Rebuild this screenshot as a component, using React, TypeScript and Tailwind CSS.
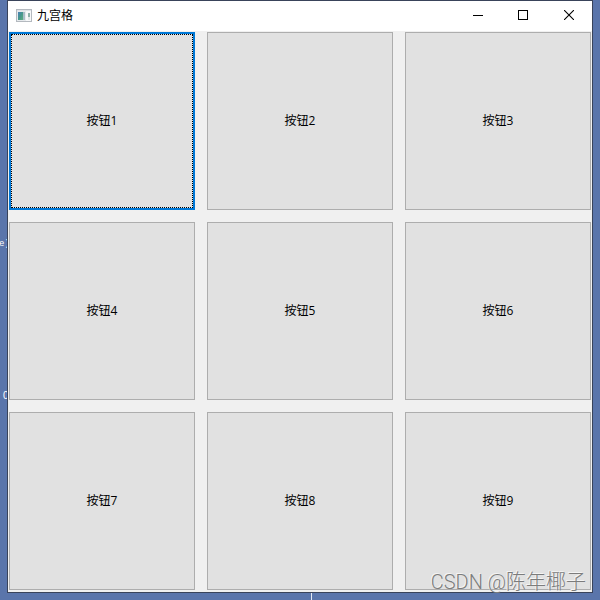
import React, { useState } from "react";

const labels = ["按钮1", "按钮2", "按钮3", "按钮4", "按钮5", "按钮6", "按钮7", "按钮8", "按钮9"];

function AppIcon() {
  return (
    <svg width="16" height="14" viewBox="0 0 16 14" shapeRendering="crispEdges" aria-hidden="true">
      <defs>
        <linearGradient id="pane" x1="0" y1="0" x2="1" y2="1">
          <stop offset="0" stopColor="#4a7fb8" />
          <stop offset="0.5" stopColor="#45968c" />
          <stop offset="1" stopColor="#5fae7d" />
        </linearGradient>
      </defs>
      <rect x="0" y="0" width="16" height="13" fill="#b4b9bf" />
      <rect x="1" y="1" width="14" height="11" fill="#dfe2e6" />
      <rect x="1" y="2" width="9" height="10" fill="#e6eaed" />
      <rect x="2" y="3" width="5" height="8" fill="url(#pane)" />
      <rect x="7" y="3" width="2" height="8" fill="#a9bdc6" />
      <rect x="10" y="2" width="5" height="10" fill="#f7f8f9" />
      <rect x="12" y="4" width="2" height="4" fill="#8cb0a8" />
      <rect x="12" y="8" width="2" height="3" fill="#e2e6e8" />
    </svg>
  );
}

function TitleBar() {
  const control = "flex h-[28px] items-center justify-center text-black hover:bg-[#e5e5e5]";
  return (
    <header className="flex h-[30px] shrink-0 items-start bg-white pl-2">
      <div className="flex h-[30px] flex-1 items-center gap-[5px]">
        <AppIcon />
        <h1 className="text-xs text-black">九宫格</h1>
      </div>
      <button aria-label="最小化" className={`${control} w-[44px]`}>
        <svg width="10" height="10" shapeRendering="crispEdges">
          <path d="M0 5.500H10" stroke="currentColor" />
        </svg>
      </button>
      <button aria-label="最大化" className={`${control} w-[46px]`}>
        <svg width="10" height="10" shapeRendering="crispEdges">
          <rect x="0.500" y="0.500" width="9" height="9" fill="none" stroke="currentColor" />
        </svg>
      </button>
      <button aria-label="关闭" className={`${control} w-[46px]`}>
        <svg width="10" height="10">
          <path d="M0 0L10 10M10 0L0 10" stroke="currentColor" strokeWidth="1.100" />
        </svg>
      </button>
    </header>
  );
}

export default function App() {
  const [active, setActive] = useState(0);
  return (
    <div
      className="relative flex h-screen flex-col overflow-hidden bg-[#5a75ab] px-[7px] pb-[7px]"
      style={{ fontFamily: '"Open Sans", "Noto Sans CJK SC", sans-serif' }}
    >
      <span className="absolute top-[238px] left-[-1px] font-['Liberation_Mono',monospace] text-[9px] leading-3 text-white">
        e)
      </span>
      <span className="absolute top-[390px] left-[3px] font-['Liberation_Sans',sans-serif] text-[10px] leading-3 text-white">
        0
      </span>
      <span className="absolute bottom-0 left-[311px] h-[7px] w-px bg-[#e3e8f2]" />

      <main className="relative flex flex-1 flex-col border border-[#39435a] bg-[#f0f0f0]">
        <TitleBar />
        <div className="grid flex-1 grid-cols-3 grid-rows-3 gap-3 px-px pt-px pb-0.5">
          {labels.map((label, i) => (
            <button
              key={label}
              onClick={() => setActive(i)}
              className={
                i === active
                  ? "border-2 border-[#0078d7] bg-[#e1e1e1] text-xs text-black outline-none"
                  : "border border-[#adadad] bg-[#e1e1e1] text-xs text-black outline-none"
              }
            >
              {i === active ? (
                <span className="flex h-full items-center justify-center border border-dotted border-black">
                  {label}
                </span>
              ) : (
                label
              )}
            </button>
          ))}
        </div>
      </main>

      <span className="pointer-events-none absolute right-[14px] bottom-[6px] font-['Roboto','Noto_Sans_CJK_SC',sans-serif] text-xl leading-6 font-light whitespace-nowrap text-[#7c7c7c] [text-shadow:-1px_-1px_0_#f4f4f4]">
        CSDN @陈年椰子
      </span>
    </div>
  );
}
